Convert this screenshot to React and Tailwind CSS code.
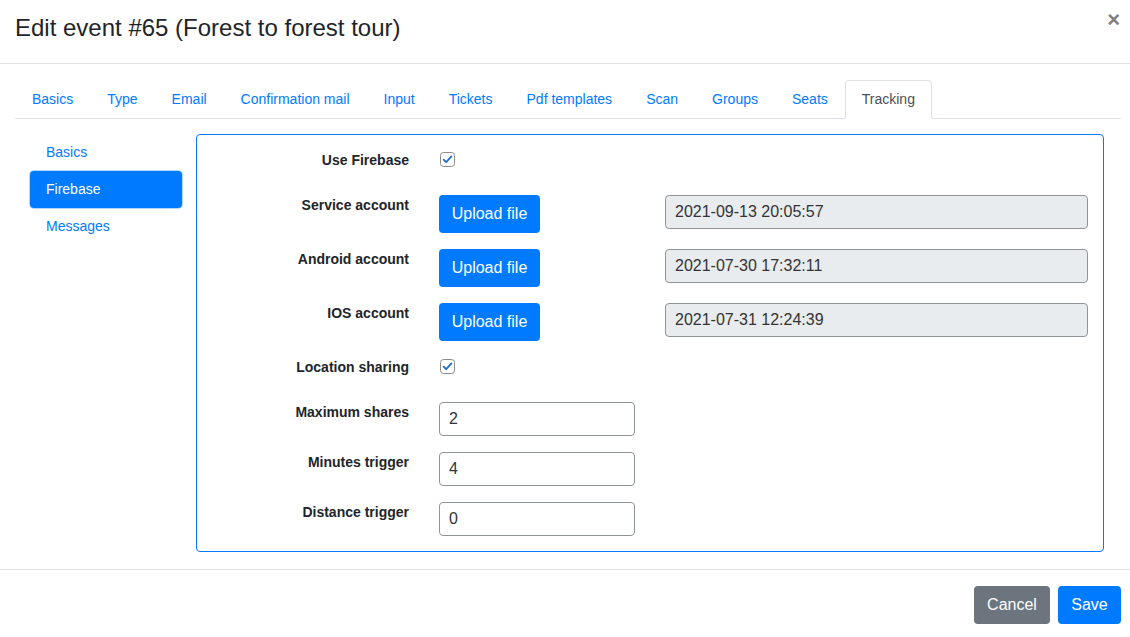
import React from "react";

const font = { fontFamily: '"Liberation Sans", Arial, sans-serif' };

function Check() {
  return (
    <svg width="15" height="15" viewBox="0 0 15 15" className="block">
      <rect x="0.5" y="0.5" width="14" height="14" rx="3" fill="#fff" stroke="#8a8a8a" />
      <path d="M3.6 7.6 L6.2 10.2 L11.4 4.4" fill="none" stroke="#1f6fd1" strokeWidth="1.8" strokeLinecap="round" strokeLinejoin="round" />
    </svg>
  );
}

const tabs = ["Basics", "Type", "Email", "Confirmation mail", "Input", "Tickets", "Pdf templates", "Scan", "Groups", "Seats", "Tracking"];

function Label({ children }) {
  return <div className="w-[197px] text-right text-[14px] leading-[21px] font-bold text-[#212529]">{children}</div>;
}

function UploadRow({ label, value }) {
  return (
    <div className="flex items-start h-[38px] mb-[16px]">
      <Label>{label}</Label>
      <button className="ml-[30px] w-[101px] h-[38px] rounded-[4px] bg-[#007bff] text-white text-[16px] leading-[24px]">Upload file</button>
      <div className="ml-[125px] w-[423px] h-[34px] rounded-[4px] border border-[#8f9499] bg-[#e9ecef] pl-[9px] text-[16px] leading-[32px] text-[#333]">{value}</div>
    </div>
  );
}

function CheckRow({ label }) {
  return (
    <div className="flex items-start h-[29px] mb-[16px]">
      <Label>{label}</Label>
      <div className="ml-[31px] mt-[2px]"><Check /></div>
    </div>
  );
}

function NumRow({ label, value, last }) {
  return (
    <div className={"flex items-start h-[34px] " + (last ? "" : "mb-[16px]")}>
      <Label>{label}</Label>
      <div className="ml-[30px] w-[196px] h-[34px] rounded-[4px] border border-[#8f9499] bg-white pl-[9px] text-[16px] leading-[32px] text-[#333]">{value}</div>
    </div>
  );
}

export default function App() {
  return (
    <div style={font} className="w-[1130px] h-[637px] bg-white text-[#212529] overflow-hidden">
      {/* Header */}
      <div className="h-[64px] border-b border-[#dee2e6] flex items-start justify-between pl-[15px] pr-[10px]">
        <div className="pt-[14px] text-[24px] leading-[28.8px] font-normal text-[#212529]">Edit event #65 (Forest to forest tour)</div>
        <div className="pt-[5px] text-[22px] font-bold text-[#808080] leading-[30px]">×</div>
      </div>
      {/* Body */}
      <div className="h-[505px] pt-[16px] pl-[15px] pr-[9px]">
        <div className="flex h-[39px] border-b border-[#dee2e6]">
          {tabs.map((t) => {
            const active = t === "Tracking";
            return (
              <div
                key={t}
                className={
                  "h-[39px] px-[16px] py-[8px] text-[14px] leading-[21px] border rounded-t-[4px] " +
                  (active ? "border-[#dee2e6] border-b-white bg-white text-[#495057]" : "border-transparent text-[#007bff]")
                }
              >
                {t}
              </div>
            );
          })}
        </div>
        <div className="flex mt-[15px]">
          <div className="ml-[15px] w-[152px] flex flex-col">
            <div className="h-[37px] px-[16px] py-[8px] text-[14px] leading-[21px] text-[#007bff]">Basics</div>
            <div className="h-[37px] px-[16px] py-[8px] text-[14px] leading-[21px] text-white bg-[#007bff] rounded-[4px] shadow-[0_0_0_1px_rgba(0,123,255,0.3)]">Firebase</div>
            <div className="h-[37px] px-[16px] py-[8px] text-[14px] leading-[21px] text-[#007bff]">Messages</div>
          </div>
          <div className="ml-[14px] w-[908px] h-[418px] border border-[#007bff] rounded-[4px] px-[15px] py-[15px]">
            <CheckRow label="Use Firebase" />
            <UploadRow label="Service account" value="2021-09-13 20:05:57" />
            <UploadRow label="Android account" value="2021-07-30 17:32:11" />
            <UploadRow label="IOS account" value="2021-07-31 12:24:39" />
            <CheckRow label="Location sharing" />
            <NumRow label="Maximum shares" value="2" />
            <NumRow label="Minutes trigger" value="4" />
            <NumRow label="Distance trigger" value="0" last />
          </div>
        </div>
      </div>
      {/* Footer */}
      <div className="h-[68px] border-t border-[#dee2e6] pt-[16px] pr-[9px] flex justify-end items-start gap-[8px]">
        <button className="w-[76px] h-[38px] rounded-[4px] bg-[#6c757d] text-white text-[16px] leading-[24px]">Cancel</button>
        <button className="w-[63px] h-[38px] rounded-[4px] bg-[#007bff] text-white text-[16px] leading-[24px]">Save</button>
      </div>
    </div>
  );
}
